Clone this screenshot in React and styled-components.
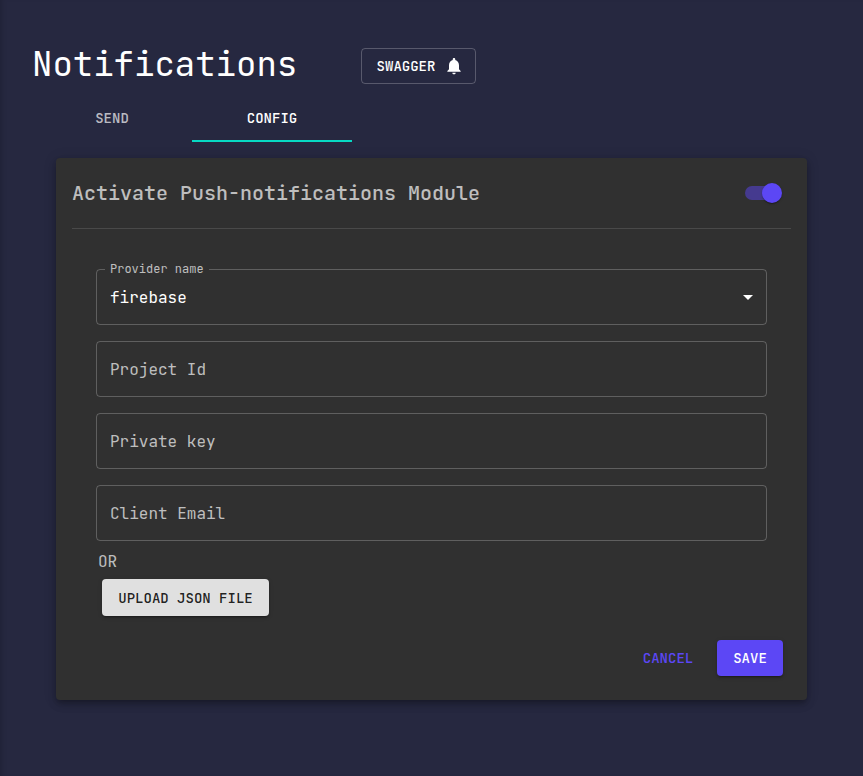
import React, { useState } from "react";
import styled, { createGlobalStyle } from "styled-components";

const GlobalStyle = createGlobalStyle`
  *, *::before, *::after { box-sizing: border-box; }
  body {
    margin: 0;
    background: #262840;
    color: #fff;
    font-family: "JetBrains Mono", "DejaVu Sans Mono", "Liberation Mono", monospace;
    font-size: 16px;
  }
  button { font-family: inherit; }
`;

const Page = styled.main`
  min-height: 776px;
  padding: 40px 56px 0 32px;
  box-shadow: inset 5px 0 5px -3px rgba(0, 0, 0, 0.15);
`;

const Header = styled.header`
  display: flex;
  align-items: center;
  height: 54px;
`;

const Title = styled.h1`
  width: 329px;
  margin: 0;
  font-size: 34px;
  font-weight: 400;
  line-height: 42px;
  padding-bottom: 7px;
`;

const Button = styled.button`
  display: inline-flex;
  align-items: center;
  justify-content: center;
  height: ${(p) => p.$height || 36}px;
  width: ${(p) => p.$width}px;
  padding: 0;
  border: 0;
  border-radius: 4px;
  background: transparent;
  color: #fff;
  font-size: 14px;
  font-weight: 500;
  line-height: 24px;
  white-space: nowrap;
`;

const OutlinedButton = styled(Button)`
  border: 1px solid rgba(255, 255, 255, 0.23);
  gap: 9px;
  margin-top: -2px;
  padding-left: 4px;
`;

const RaisedButton = styled(Button)`
  background: ${(p) => (p.$primary ? "#5c47f5" : "#e0e0e0")};
  color: ${(p) => (p.$primary ? "#fff" : "rgba(0, 0, 0, 0.87)")};
  box-shadow: 0 3px 1px -2px rgba(0, 0, 0, 0.2), 0 2px 2px 0 rgba(0, 0, 0, 0.14),
    0 1px 5px 0 rgba(0, 0, 0, 0.12);
`;

const TextButton = styled(Button)`
  color: #5c47f5;
`;

const Tabs = styled.nav`
  display: flex;
  height: 48px;
`;

const Tab = styled.button`
  width: 160px;
  padding: 2px 0 0;
  border: 0;
  border-bottom: 2px solid ${(p) => (p.$active ? "#07d9c4" : "transparent")};
  background: transparent;
  color: ${(p) => (p.$active ? "#fff" : "rgba(255, 255, 255, 0.7)")};
  font-size: 14px;
  font-weight: 500;
`;

const Card = styled.section`
  height: 542px;
  margin: 16px 0 0 24px;
  padding: 0 16px;
  border-radius: 4px;
  background: #303030;
  color: rgba(255, 255, 255, 0.7);
  box-shadow: 0 3px 5px -1px rgba(0, 0, 0, 0.2), 0 5px 8px 0 rgba(0, 0, 0, 0.14),
    0 1px 14px 0 rgba(0, 0, 0, 0.12);
`;

const CardHeader = styled.div`
  display: flex;
  align-items: center;
  justify-content: space-between;
  height: 71px;
  padding-right: 9px;
  border-bottom: 1px solid rgba(255, 255, 255, 0.12);
`;

const CardTitle = styled.h2`
  margin: 0;
  font-size: 20px;
  font-weight: 500;
`;

const SwitchTrack = styled.button`
  position: relative;
  display: flex;
  align-items: center;
  justify-content: ${(p) => (p.$on ? "flex-end" : "flex-start")};
  width: 37px;
  height: 20px;
  padding: 0;
  border: 0;
  background: transparent;

  &::before {
    content: "";
    position: absolute;
    left: 0;
    top: 3px;
    width: 34px;
    height: 14px;
    border-radius: 7px;
    background: #453a8f;
  }
`;

const SwitchThumb = styled.span`
  position: relative;
  width: 20px;
  height: 20px;
  border-radius: 50%;
  background: #5c47f5;
  box-shadow: 0 2px 1px -1px rgba(0, 0, 0, 0.2), 0 1px 1px 0 rgba(0, 0, 0, 0.14),
    0 1px 3px 0 rgba(0, 0, 0, 0.12);
`;

const Form = styled.div`
  display: flex;
  flex-direction: column;
  gap: 16px;
  padding: 32px 24px 0;
`;

const Field = styled.fieldset`
  min-width: 0;
  height: ${(p) => (p.$labelled ? 64 : 56)}px;
  margin: 0;
  padding: 0 6px 0 13px;
  border: 1px solid rgba(255, 255, 255, 0.23);
  border-radius: 4px;
  color: ${(p) => (p.$labelled ? "#fff" : "inherit")};
`;

const FieldLabel = styled.legend`
  margin-left: -5px;
  padding: 0 5px;
  font-size: 12px;
  line-height: 16px;
  color: rgba(255, 255, 255, 0.7);
`;

const FieldValue = styled.div`
  display: flex;
  align-items: flex-start;
  justify-content: space-between;
  padding-top: ${(p) => (p.$labelled ? 8 : 15)}px;
  line-height: 26px;
`;

const Or = styled.p`
  margin: 9px 0 0 26px;
  line-height: 24px;
`;

const Upload = styled.div`
  display: flex;
  margin: 5px 0 0 30px;
`;

const Actions = styled.div`
  display: flex;
  justify-content: flex-end;
  gap: 8px;
  margin-top: 24px;
  padding-right: 8px;
`;

const Icon = styled.svg`
  display: block;
  flex: none;
  fill: currentColor;
  width: ${(p) => p.$size}px;
  height: ${(p) => p.$size}px;
`;

function BellIcon() {
  return (
    <Icon $size={20} viewBox="0 0 24 24">
      <path d="M12 22c1.1 0 2-.9 2-2h-4c0 1.1.89 2 2 2zm6-6v-5c0-3.07-1.64-5.64-4.5-6.32V4c0-.83-.67-1.5-1.5-1.5s-1.5.67-1.5 1.5v.68C7.63 5.36 6 7.92 6 11v5l-2 2v1h16v-1l-2-2z" />
    </Icon>
  );
}

function ArrowDropDown() {
  return (
    <Icon $size={24} viewBox="0 0 24 24">
      <path d="M7 10l5 5 5-5z" />
    </Icon>
  );
}

export default function App() {
  const [tab, setTab] = useState("CONFIG");
  const [active, setActive] = useState(true);
  return (
    <>
      <GlobalStyle />
      <Page>
        <Header>
          <Title>Notifications</Title>
          <OutlinedButton $width={115}>
            SWAGGER
            <BellIcon />
          </OutlinedButton>
        </Header>
        <Tabs>
          {["SEND", "CONFIG"].map((name) => (
            <Tab key={name} $active={tab === name} onClick={() => setTab(name)}>
              {name}
            </Tab>
          ))}
        </Tabs>
        <Card>
          <CardHeader>
            <CardTitle>Activate Push-notifications Module</CardTitle>
            <SwitchTrack $on={active} onClick={() => setActive(!active)} aria-label="Activate">
              <SwitchThumb />
            </SwitchTrack>
          </CardHeader>
          <Form>
            <Field $labelled>
              <FieldLabel>Provider name</FieldLabel>
              <FieldValue $labelled>
                <span>firebase</span>
                <ArrowDropDown />
              </FieldValue>
            </Field>
            {["Project Id", "Private key", "Client Email"].map((label) => (
              <Field key={label}>
                <FieldValue>{label}</FieldValue>
              </Field>
            ))}
          </Form>
          <Or>OR</Or>
          <Upload>
            <RaisedButton $width={167} $height={37}>UPLOAD JSON FILE</RaisedButton>
          </Upload>
          <Actions>
            <TextButton $width={82}>CANCEL</TextButton>
            <RaisedButton $width={66} $primary>SAVE</RaisedButton>
          </Actions>
        </Card>
      </Page>
    </>
  );
}
